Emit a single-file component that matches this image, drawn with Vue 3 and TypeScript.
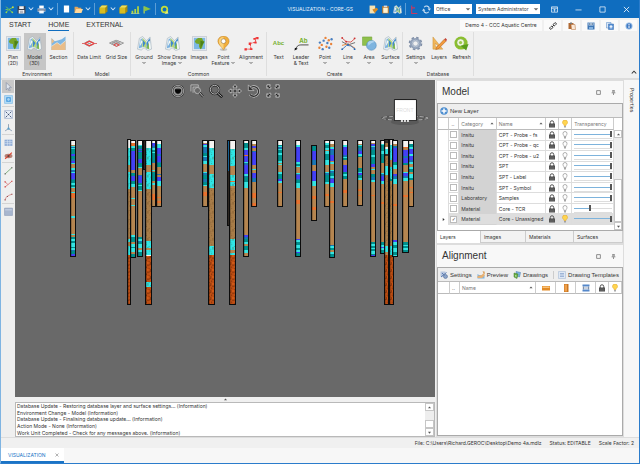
<script setup lang="ts">
import { ref } from 'vue'

interface Tool { label: string; sub?: string; icon: string; drop?: boolean; active?: boolean }
interface Group { name: string; tools: Tool[] }

const groups: Group[] = [
  { name: 'Environment', tools: [
    { label: 'Plan', sub: '(2D)', icon: 'africa' },
    { label: 'Model', sub: '(3D)', icon: 'map', active: true },
    { label: 'Section', icon: 'section' } ] },
  { name: 'Model', tools: [
    { label: 'Data Limit', icon: 'limit' },
    { label: 'Grid Size', icon: 'grid' } ] },
  { name: 'Common', tools: [
    { label: 'Ground', icon: 'map', drop: true },
    { label: 'Show Drape', sub: 'Image', icon: 'map', drop: true },
    { label: 'Images', icon: 'africa' },
    { label: 'Point', sub: 'Feature', icon: 'pin', drop: true },
    { label: 'Alignment', icon: 'align', drop: true } ] },
  { name: 'Create', tools: [
    { label: 'Text', icon: 'abc' },
    { label: 'Leader', sub: '& Text', icon: 'leader' },
    { label: 'Point', icon: 'points', drop: true },
    { label: 'Line', icon: 'lines', drop: true },
    { label: 'Area', icon: 'area', drop: true },
    { label: 'Surface', icon: 'map', drop: true } ] },
  { name: 'Database', tools: [
    { label: 'Settings', icon: 'gear', drop: true },
    { label: 'Layers', icon: 'layers' },
    { label: 'Refresh', icon: 'refresh' } ] },
]

const sideTools = [
  ['Select', 'select'], ['Zoom to selection', 'selbox'], ['', ''], ['Extents', 'extents'], ['Axes', 'axes'], ['', ''],
  ['Grid', 'table'], ['Hide', 'hide'], ['', ''], ['Line', 'sline'], ['Snap', 'snap'], ['Curve', 'curve'], ['', ''], ['Block', 'block'],
]
const navTools = ['orbit', 'zoomwin', 'zoom', 'pan', 'rotate', 'fit']

interface Layer { category: string; name: string; level: number; on?: boolean }
const layers = ref<Layer[]>([
  { category: 'Insitu', name: 'CPT - Probe - fs', level: 100 },
  { category: 'Insitu', name: 'CPT - Probe - qc', level: 100 },
  { category: 'Insitu', name: 'CPT - Probe - u2', level: 100 },
  { category: 'Insitu', name: 'SPT', level: 100 },
  { category: 'Insitu', name: 'SPT - Label', level: 100 },
  { category: 'Insitu', name: 'SPT - Symbol', level: 100 },
  { category: 'Laboratory', name: 'Samples', level: 100 },
  { category: 'Material', name: 'Core - TCR', level: 42 },
  { category: 'Material', name: 'Core - Unassigned', level: 100, on: true },
])

const log = [
  'Database Update - Restoring database layer and surface settings... (Information)',
  'Environment Change - Model (Information)',
  'Database Update - Finalising database update... (Information)',
  'Action Mode - None (Information)',
  'Work Unit Completed - Check for any messages above. (Information)',
]

// Strata colours keyed by the letter used in each hole's log
const strata: Record<string, string> = {
  w: '#f6f4f2', b: '#b58550', c: '#35e4e2', t: '#008f8c', u: '#4340f4', o: '#e8712e',
  s: '#1a76b4', r: '#bd4d12', d: '#38302a', x: '#a87c48', p: '#2fe6e6',
}
// x centre, inner width, top, bottom, strata as letter + thickness
const logs: [number, number, number, number, string][] = [
  [144, 1, 141, 169, 'd28'],
  [228, 2, 141, 225, 's30 d55'],
  [129, 2, 140, 303, 'w8 p17 b7 p17 x50 p3 x4 p9 r48'],
  [73, 4, 141, 256, 'w4 b1 c1 s1 c1 t5 u2 t3 s2 u2 c1 b4 c2 s2 c1 u6 s1 t3 c2 t2 c1 b4 c1 o5 b20 c2 b16 c1 b2 t2 c2 t2 c4 t1 c2 s1 t3 u2'],
  [133, 4, 141, 257, 'w2 o3 c2 t3 u19 b3 t3 u5 t3 c3 b11 c1 b6 c1 b34 c2 t5 b2 c3 t1 c4 b2 t3'],
  [140, 4, 141, 256, 'w4 c1 t3 u1 t1 u1 t7 u4 t4 c1 b7 s1 u7 t2 c1 t4 c1 b58 t2 c2 s1 t2 c4 b2 c2 t4'],
  [148, 5, 141, 303, 'w7 p17 b7 p17 x52 p7 b2 p5 w1 r26 p5 r16'],
  [153, 3, 141, 206, 'w2 u3 s2 c2 t2 c1 t12 s1 b7 c1 b1 t9 b2 c2 b9 o6 b6'],
  [159, 4, 141, 206, 'w3 c4 u6 s2 u6 s1 t4 b7 s1 b2 u4 c5 b11 o1 b3 o2 b3'],
  [205, 4, 141, 206, 'w2 b1 u1 c2 s6 t3 c1 s4 c3 b8 c1 s2 t4 s3 t3 c1 b6 o4 b11'],
  [211, 5, 141, 303, 'w7 p17 b9 p14 x58 p9 r48'],
  [231, 5, 141, 303, 'w8 p17 b9 p6 o1 p4 b2 x51 p11 b3 p2 r48'],
  [245, 4, 141, 256, 'w2 t5 c2 u5 o1 u6 c1 s2 u9 c2 s1 t5 c6 b52 u2 s2 t3 c2 b2 t4 c3 b3'],
  [253, 4, 141, 206, 'w3 b2 u2 b3 s1 u14 b4 c1 b3 u5 s4 b11 o5 b5 o3'],
  [279, 4, 141, 206, 'w4 t1 c1 s2 c1 t3 c2 t6 c2 b1 c1 b7 c2 t5 u2 c2 b9 o1 b13'],
  [297, 4, 141, 256, 'w4 c2 u15 c2 t2 c1 b6 c1 s1 u4 s1 t3 c5 b12 o4 b40 u1 c2 t3 c3 t2 c2 u1 t3'],
  [313, 4, 146, 220, 't5 u11 s5 b6 u10 c5 b10 o3 b8 o3 b10'],
  [326, 4, 141, 206, 'w2 c2 t3 c2 b1 c3 t6 c5 b7 c1 s2 t7 c2 b10 o2 b10'],
  [331, 4, 141, 257, 'w3 b3 c2 u1 s5 u6 b1 c2 b6 c1 s2 t3 c2 s1 u4 c4 b14 o2 b42 s1 c2 t2 b2 c2 t3'],
  [344, 4, 141, 206, 'w4 c2 u8 s2 c1 t2 b5 u7 t2 c2 t3 b11 o3 b12'],
  [359, 4, 141, 205, 'w3 b1 c1 t2 s3 u3 c2 t1 b8 b3 t4 c1 u2 t3 c2 b9 o2 b4 o1 b9'],
  [372, 4, 141, 256, 'w2 b1 u2 c1 s3 t5 c2 t7 u3 b2 c1 b4 t3 s3 c2 b13 o1 b40 t2 c2 t2 c1 t2 c3 t1 u1'],
  [382, 4, 141, 253, 'w3 c1 t6 c3 t9 b10 c1 s2 u5 c3 b18 o2 b36 t3 c2 u1 c2 t3'],
  [385, 3, 140, 303, 'd3 x4 w2 c5 d2 x10 c9 x70 c6 b3 r48'],
  [390, 3, 140, 303, 'w5 p15 b7 p12 t2 b3 x69 p9 r48'],
  [394, 4, 141, 256, 'w3 b2 s2 u14 t3 c4 b5 u2 s3 c5 b20 o2 b35 u2 c3 t3 c4 t3 c1'],
  [404, 5, 141, 252, 'w6 o1 b2 u6 s2 u5 t2 b7 c1 u3 s2 c3 b14 o2 b40 t3 c1 t2 c2 t2'],
  [410, 4, 141, 206, 'w3 t3 c2 u5 c2 u4 s2 c2 b3 c2 t3 b2 c4 t2 b7 o1 b4 o1 b14'],
]

interface Seg { y: number; h: number; c: string; rough: string }
const holes = logs.map(([cx, w, top, bottom, text]) => {
  const parts = text.split(' ').map((p) => ({ k: p[0], h: Number(p.slice(1)) }))
  // The thickest stratum takes up whatever the others leave
  const total = parts.reduce((n, p) => n + p.h, 0)
  const fill = parts.filter((p) => p.k !== 'r').reduce((a, b) => (b.h > a.h ? b : a))
  fill.h += bottom - top - total
  let y = top
  const segs: Seg[] = parts.map(({ k, h }) => {
    const seg = { y, h, c: strata[k], rough: k === 'r' ? 'url(#coarse)' : 'px'.includes(k) ? 'url(#rough)' : '' }
    y += h
    return seg
  })
  return { x: cx - Math.floor(w / 2), w, top, height: bottom - top, segs }
})
</script>

<template>
  <div class="app">
    <svg class="defs" aria-hidden="true">
      <symbol id="spark" viewBox="0 0 16 16"><path d="M2 3l5 5M14 4L7 8l-5 5M7 8l6 5M1 8h4" stroke="#7ed348" stroke-width="1.6" fill="none" /><circle cx="14" cy="4" r="1.6" fill="#d5e33c" /><circle cx="13" cy="13" r="1.6" fill="#9bd84a" /><circle cx="2.500" cy="13" r="1.500" fill="#9bd84a" /></symbol>
      <symbol id="save" viewBox="0 0 16 16"><path d="M1 2h14v13H1z" fill="#39414f" /><path d="M4 2h8v5H4zM3 9h10v6H3z" fill="#f2f4f8" /><path d="M5 11h6M5 13h6" stroke="#667" /></symbol>
      <symbol id="print" viewBox="0 0 16 16"><path d="M4 1h8v5H4z" fill="#fff" /><path d="M1 6h14v6H1z" fill="#b9c6d8" /><path d="M1 8h14v2H1z" fill="#55657c" /><path d="M4 10h8v5H4z" fill="#f4f8fc" /></symbol>
      <symbol id="page" viewBox="0 0 16 16"><path d="M2 0h12v16H2z" fill="#fff" /></symbol>
      <symbol id="folder" viewBox="0 0 16 16"><path d="M1 3h5l2 2h5v9H1z" fill="#e1a65c" /><path d="M4 7h12l-3 7H1z" fill="#ffd79a" /></symbol>
      <symbol id="cube" viewBox="0 0 16 16"><path d="M1 5l4-4h10v10l-4 4H1z" fill="#a88e10" /><path d="M1 5h10v10H1z" fill="#d9bd20" /><path d="M1 5l4-4h10l-4 4z" fill="#f2de58" /></symbol>
      <symbol id="bars" viewBox="0 0 16 16"><path d="M1 10h3v5H1zM6 7h3v8H6zM11 2h3v13h-3z" fill="#b7d83b" /><path d="M0 15h15" stroke="#e6ef8e" /></symbol>
      <symbol id="flag" viewBox="0 0 16 16"><path d="M2 2v13" stroke="#c6e04a" stroke-width="2" /><path d="M3 2l11 5-11 4z" fill="#8cc63f" /></symbol>
      <symbol id="loop" viewBox="0 0 16 16"><circle cx="8" cy="8" r="5" fill="none" stroke="#c5dc3a" stroke-width="3" /><path d="M8 16l5-6 2 5z" fill="#e8f07b" /></symbol>
      <symbol id="edit" viewBox="0 0 16 16"><path d="M1 1h10v14H1z" fill="#f7e3b2" /><path d="M6 8l8-3 2 3-6 6z" fill="#d88a22" /></symbol>
      <symbol id="clip" viewBox="0 0 16 16"><path d="M2 2h12v13H2z" fill="#b97b35" /><path d="M4 5h8v9H4z" fill="#fff3d0" /><path d="M5 1h6v3H5z" fill="#d9dde4" /></symbol>
      <symbol id="axis" viewBox="0 0 16 16"><path d="M3 1v14h10M3 5h6" stroke="#c43a62" stroke-width="2" fill="none" /></symbol>
      <symbol id="sync" viewBox="0 0 16 16"><path d="M3 10a5 5 0 0 0 9 2M13 6a5 5 0 0 0-9-2" fill="none" stroke="#cfe2f4" stroke-width="2" /><path d="M0 10h6L3 6zM16 6h-6l3 4z" fill="#cfe2f4" /></symbol>
      <symbol id="chev" viewBox="0 0 8 8"><path d="M1 2l3 3 3-3" fill="none" stroke="currentColor" stroke-width="1.400" /></symbol>
      <symbol id="tri" viewBox="0 0 8 8"><path d="M1 3h6L4 6z" fill="currentColor" /></symbol>
      <symbol id="triup" viewBox="0 0 8 8"><path d="M0 6h8L4 1z" fill="currentColor" /></symbol>
      <symbol id="dock" viewBox="0 0 16 16"><path d="M1 2h14v12H1zM1 5h14M8 13V8M5 10l3-3 3 3" fill="none" stroke="#fff" stroke-width="1.600" /></symbol>
      <symbol id="min" viewBox="0 0 16 16"><path d="M1 9h14" stroke="#fff" stroke-width="1.600" /></symbol>
      <symbol id="max" viewBox="0 0 16 16"><path d="M2 2h12v12H2z" stroke="#fff" stroke-width="1.600" fill="none" /></symbol>
      <symbol id="close" viewBox="0 0 16 16"><path d="M2 2l12 12M14 2L2 14" stroke="currentColor" stroke-width="1.800" /></symbol>
      <symbol id="link" viewBox="0 0 16 16"><g fill="none" stroke="#333" stroke-width="1.800"><rect x="-3.500" y="-2" width="7" height="4" rx="2" transform="translate(4.500 11.500) rotate(-45)" /><rect x="-3.500" y="-2" width="7" height="4" rx="2" transform="translate(11.500 4.500) rotate(-45)" /><path d="M6 10l4-4" /></g></symbol>
      <symbol id="paste" viewBox="0 0 16 16"><path d="M1 2h10v12H1z" fill="#b06a35" /><path d="M4 1h4v3H4z" fill="#777" /><path d="M6 5h8l1 10H7z" fill="#fbe9d8" stroke="#b06a35" /></symbol>
      <symbol id="disk" viewBox="0 0 16 16"><path d="M1 1h14v14H1z" fill="#3d75b5" /><path d="M3 1h10v6H3z" fill="#cfe0f2" /><path d="M4 3h3v2H4zM9 3h3v2H9z" fill="#24476f" /><path d="M4 10h8v5H4z" fill="#85b2df" /></symbol>
      <symbol id="copyadd" viewBox="0 0 16 16"><path d="M1 1h9v11H1z" fill="#dce9f8" stroke="#4f84c4" /><path d="M5 4h10v11H5z" fill="#5a92d6" stroke="#2e66ad" /><path d="M10 6v7M7 9.500h6" stroke="#fff" stroke-width="2" /></symbol>
      <symbol id="info" viewBox="0 0 16 16"><circle cx="8" cy="8" r="7" fill="#8eb6e2" /><circle cx="8" cy="8" r="5" fill="#3f78c2" /><path d="M8 4v2M8 7v5" stroke="#fff" stroke-width="2" /></symbol>
      <symbol id="africa" viewBox="0 0 32 32"><path d="M1 1h30v30H1z" fill="#e6e9ee" stroke="#a7b1bf" /><path d="M4 4h24v24H4z" fill="#7db8e4" /><path d="M8 8l5-4h8l3 6 3 2-3 5-3 9-3 2-3-5 0-6-6-1-3-4z" fill="#76a528" /><path d="M18 10l8 2-5 9-3 7z" fill="#4c8218" /></symbol>
      <symbol id="map" viewBox="0 0 32 32"><path d="M1 28L5 5l7-4 8 9 8-8 3 26-8 3-8-6-6 5z" fill="#e6edf1" stroke="#93a4b2" /><path d="M4 26L7 8l5-4-1 20z" fill="#79b0df" /><path d="M12 4l8 8v14l-5-3-4 1z" fill="#b6d777" /><path d="M12 8l6 7-5 9zM20 15l7-11 1 10-7 14z" fill="#3f88cc" /><path d="M8 8l4 4-6 10zM24 12l3-2 2 16-4 2z" fill="#f5f8f4" /><path d="M20 26l5-12 1 14z" fill="#7db655" /></symbol>
      <symbol id="section" viewBox="0 0 32 32"><path d="M1 4l7 7 8-2 7-2 8-6v29H1z" fill="#7fb7e2" /><path d="M1 22l12-8 7 5 11-9v20H1z" fill="#e9bd89" /><path d="M1 5l6 6-6 6z" fill="#e9bd89" /><path d="M1 22l12-8 7 5 11-9" fill="none" stroke="#fff" /></symbol>
      <symbol id="limit" viewBox="0 0 32 32"><g fill="none" stroke-width="2"><path d="M4 16l11-6 12 6-12 6zM9 13l13 6M22 13l-13 6" stroke="#9a9a9a" /><path d="M6 16l10-5 10 5-10 5z" stroke="#ee3c3c" stroke-width="2.400" /><path d="M0 16h7M25 16h7" stroke="#d66" /></g></symbol>
      <symbol id="grid" viewBox="0 0 32 32"><g fill="none" stroke-width="2"><path d="M1 15l14-6 16 6-15 7zM6 12.500l15 7M11 11l15 7M25 12L9 19M20 10L5 17" stroke="#959595" /><path d="M10 19l6-3 6 3-6 3z" stroke="#e54b4b" /></g></symbol>
      <symbol id="pin" viewBox="0 0 32 32"><ellipse cx="16" cy="29" rx="8" ry="3" fill="#999" opacity=".5" /><path d="M16 30C13 22 4 19 4 11a12 11 0 0 1 24 0c0 8-9 11-12 19z" fill="#f1ae3c" stroke="#b97a1d" /><path d="M16 30C13 22 6 19 6 11a10 9 0 0 1 10-9z" fill="#fad27c" /><circle cx="16" cy="11" r="5" fill="#fff" stroke="#7b5520" /></symbol>
      <symbol id="align" viewBox="0 0 32 32"><path d="M3 28h12l-2-12 12-3-1-9h6" fill="none" stroke="#e44" stroke-width="2" stroke-dasharray="5 1" /><g fill="#e33"><path d="M1 26h5v5H1zM13 26h5v4h-5zM10 14h5v5h-5zM22 12h5v4h-5zM26 2h5v5h-5zM20 4h5v4h-5z" /></g></symbol>
      <symbol id="leader" viewBox="0 0 32 32"><path d="M4 29c2-9 6-10 13-10h14" fill="none" stroke="#444" stroke-width="2" /><path d="M1 31l1-6 6 2z" fill="#111" /></symbol>
      <symbol id="points" viewBox="0 0 32 32"><g fill="#4a7fc0"><circle cx="4" cy="14" r="2.500" /><circle cx="12" cy="10" r="2.500" /><circle cx="20" cy="15" r="2.500" /><circle cx="29" cy="7" r="2.500" /><circle cx="10" cy="28" r="2.500" /><circle cx="24" cy="25" r="2.500" /></g><g fill="#e8833a"><circle cx="8" cy="19" r="2.500" /><circle cx="16" cy="4" r="2.500" /><circle cx="23" cy="9" r="2.500" /><circle cx="28" cy="17" r="2.500" /><circle cx="3" cy="25" r="2.500" /><circle cx="18" cy="23" r="2.500" /></g></symbol>
      <symbol id="lines" viewBox="0 0 32 32"><g fill="none" stroke-width="2"><path d="M2 4l9 8 10 1 9-8" stroke="#d9534f" /><path d="M2 12l13 7 15-5" stroke="#6b6b6b" /><path d="M2 20l13-3 15 9" stroke="#e8833a" /><path d="M2 29l10-9 9 1 9 7" stroke="#3f78bd" /></g><g fill="#c33"><circle cx="2.500" cy="4" r="2" /><circle cx="29" cy="5" r="2" /><circle cx="11" cy="12" r="2" /></g><g fill="#2f6ab3"><circle cx="2.500" cy="28" r="2" /><circle cx="29" cy="28" r="2" /><circle cx="15" cy="18" r="2" /></g></symbol>
      <symbol id="area" viewBox="0 0 32 32"><path d="M1 2h20v18H1z" fill="#8fc04c" stroke="#6a9a30" /><circle cx="20" cy="20" r="10.500" fill="#7eb4df" stroke="#4684ba" /><path d="M12 14a10 10 0 0 1 15-1c-5 1-10 4-13 8z" fill="#aed3ef" /></symbol>
      <symbol id="gear" viewBox="0 0 32 32"><circle cx="16" cy="16" r="12" fill="none" stroke="#7f8ea6" stroke-width="5" stroke-dasharray="5 4.420" /><circle cx="16" cy="16" r="8.500" fill="none" stroke="#93a2b9" stroke-width="7" /><circle cx="16" cy="16" r="7" fill="none" stroke="#c5cedb" stroke-width="1.500" /></symbol>
      <symbol id="layers" viewBox="0 0 32 32"><path d="M2 2l21 26H2zM7 15v8h7z" fill="#f2b75c" fill-rule="evenodd" stroke="#c58930" /><path d="M10 24L26 7l4 4-16 16-6 2z" fill="#f29a3c" stroke="#a65a1a" /><path d="M26 7l3-3 3 4-2 3z" fill="#c6453b" /></symbol>
      <symbol id="refresh" viewBox="0 0 32 32"><circle cx="15" cy="15" r="14" fill="#8bbf2f" /><circle cx="14" cy="14" r="8" fill="#eef5df" stroke="#5f9518" /><circle cx="14" cy="14" r="3.500" fill="#9bc94a" /><path d="M14 21l17-4-5 14z" fill="#589c1c" /></symbol>
      <symbol id="select" viewBox="0 0 16 16"><path d="M4 1l9 9H9l2 5-2 1-2-5-3 3z" fill="#dfe5ee" stroke="#75819a" /></symbol>
      <symbol id="selbox" viewBox="0 0 16 16"><path d="M1 1h14v14H1z" fill="#b6dcf6" stroke="#6eb2e4" /><path d="M4 4h8v8H4z" fill="#3f97dc" /><circle cx="8" cy="8" r="2.500" fill="#a8d5f6" /></symbol>
      <symbol id="extents" viewBox="0 0 16 16"><path d="M1 1h14v14H1z" fill="#e7edf6" stroke="#8fa3c2" /><path d="M3 3l3 3M13 3l-3 3M3 13l3-3M13 13l-3-3" stroke="#34466a" stroke-width="1.500" /><path d="M7 7h2v2H7z" fill="#34466a" /></symbol>
      <symbol id="axes" viewBox="0 0 16 16"><path d="M8 2v8M8 10l-6 4M8 10l6 4" stroke="#8195ad" stroke-width="1.500" /><circle cx="8" cy="10" r="2" fill="#57a0cb" /></symbol>
      <symbol id="table" viewBox="0 0 16 16"><path d="M1 3h14v11H1z" fill="#8facd6" /><path d="M1 6.500h14M1 10h14M6 3v11M10.500 3v11" stroke="#dfe9f6" /></symbol>
      <symbol id="hide" viewBox="0 0 16 16"><ellipse cx="8" cy="9" rx="7" ry="4" fill="#b78176" /><path d="M2 14L14 3" stroke="#e2412e" stroke-width="2" /><circle cx="8" cy="9" r="2" fill="#67423c" /></symbol>
      <symbol id="sline" viewBox="0 0 16 16"><path d="M2 14L14 3" stroke="#6ea76e" stroke-width="1.500" /><path d="M1 13h2v2H1zM13 2h2v2h-2z" fill="#555" /></symbol>
      <symbol id="snap" viewBox="0 0 16 16"><path d="M2 14l5-4 7-6M2 5l5 5" fill="none" stroke="#d46666" stroke-width="1.300" /><path d="M1 13h2v2H1zM13 3h2v2h-2zM1 4h2v2H1z" fill="#c33" /></symbol>
      <symbol id="curve" viewBox="0 0 16 16"><path d="M2 14c1-6 6-8 12-10" fill="none" stroke="#c77" stroke-width="1.300" /><path d="M1 13h2v2H1zM13 3h2v2h-2zM5 7h2v2H5z" fill="#944" /></symbol>
      <symbol id="block" viewBox="0 0 16 16"><path d="M1 2h14v13H1z" fill="#a8b6cf" stroke="#8595b3" /><path d="M2 5h12" stroke="#c8d2e4" stroke-width="2" /></symbol>
      <symbol id="orbit" viewBox="0 0 32 32"><circle cx="16" cy="16" r="13" fill="none" stroke="#333" stroke-width="4" /><circle cx="16" cy="16" r="13" fill="none" stroke="#ccc" stroke-width="1.600" /><circle cx="16" cy="16" r="9" fill="none" stroke="#ccc" stroke-width="1.300" /><path d="M9 12h14c1 5-3 10-7 10s-8-5-7-10z" fill="#050505" /></symbol>
      <symbol id="zoomwin" viewBox="0 0 32 32"><g fill="none" stroke="#bbb" stroke-width="2"><path d="M2 17V2h17v4M7 20V7h14" /><circle cx="17" cy="15" r="7" /></g><path d="M22 20l8 9" stroke="#222" stroke-width="5" /><path d="M22 20l8 9" stroke="#ddd" stroke-width="2" /></symbol>
      <symbol id="zoom" viewBox="0 0 32 32"><circle cx="13" cy="13" r="10" fill="none" stroke="#222" stroke-width="5" /><circle cx="13" cy="13" r="10" fill="none" stroke="#ccc" stroke-width="2" /><path d="M20 21l10 9" stroke="#111" stroke-width="6" /><path d="M20 21l9 8" stroke="#ddd" stroke-width="1.800" /></symbol>
      <symbol id="pan" viewBox="0 0 32 32"><path d="M16 1l5 6h-3v7h7v-3l6 5-6 5v-3h-7v7h3l-5 6-5-6h3v-7H7v3l-6-5 6-5v3h7V7h-3z" fill="#333" stroke="#ccc" stroke-width="1.800" /></symbol>
      <symbol id="rotate" viewBox="0 0 32 32"><path d="M8 9a11 11 0 1 1-1 15" fill="none" stroke="#ccc" stroke-width="6" /><path d="M8 9a11 11 0 1 1-1 15" fill="none" stroke="#333" stroke-width="3" /><path d="M3 2v13h13z" fill="#333" stroke="#ccc" stroke-width="1.500" /></symbol>
      <symbol id="fit" viewBox="0 0 32 32"><g fill="#222" stroke="#ddd" stroke-width="1.800"><path d="M2 2h8l-2 3 4 4-3 3-4-4-3 2zM30 2v8l-3-2-4 4-3-3 4-4-2-3zM2 30v-8l3 2 4-4 3 3-4 4 2 3zM30 30h-8l2-3-4-4 3-3 4 4 3-2z" /></g></symbol>
      <symbol id="lock" viewBox="0 0 16 16"><path d="M4.500 8V5a3.500 3.500 0 0 1 7 0v3" fill="none" stroke="#555" stroke-width="2" /><path d="M2 7h12v8H2z" fill="#484848" /><path d="M3 10h10M3 12.500h10" stroke="#999" stroke-width=".8" /></symbol>
      <symbol id="bulb" viewBox="0 0 16 16"><path d="M6 11C6 8 4 8 4 5a4 4 0 0 1 8 0c0 3-2 3-2 6z" fill="#fff" stroke="#808080" stroke-width="1.200" /><path d="M6 13h4M7 15h2" stroke="#808080" stroke-width="1.400" /></symbol>
      <symbol id="bulbon" viewBox="0 0 16 16"><path d="M6 11C6 8 3 8 3 5a5 5 0 0 1 10 0c0 3-3 3-3 6z" fill="#ffd550" stroke="#dc9f1d" /><path d="M6 13h4M7 15h2" stroke="#8b8b8b" stroke-width="1.500" /></symbol>
      <symbol id="plus" viewBox="0 0 16 16"><circle cx="8" cy="8" r="7.500" fill="#4f8fd0" /><path d="M8 3v10M3 8h10" stroke="#fff" stroke-width="3" /></symbol>
      <symbol id="square" viewBox="0 0 8 8"><path d="M1 1h6v6H1z" fill="none" stroke="#777" stroke-width="1.300" /></symbol>
      <symbol id="tack" viewBox="0 0 8 8"><path d="M2 1h4M3 1v3M5 1v3M1 4.500h6M4 5v3" fill="none" stroke="#777" stroke-width="1.300" /></symbol>
      <symbol id="acfg" viewBox="0 0 16 16"><path d="M1 1h10v10H1z" fill="#b7c6df" /><path d="M2 12L13 3M4 4l9 9" stroke="#5a7bb0" stroke-width="2" /><circle cx="11" cy="11" r="4" fill="#8aa3c9" stroke="#44618f" /></symbol>
      <symbol id="prev" viewBox="0 0 16 16"><path d="M1 6l3 2h11v7H1z" fill="#7cb2e0" /><path d="M1 10l8-2 6-5v7l-5 4H1z" fill="#e8b173" /><path d="M11 1h4v5z" fill="#d58b34" /></symbol>
      <symbol id="draws" viewBox="0 0 16 16"><path d="M6 1l9 2-2 9-5-2z" fill="#7eb6e0" stroke="#3f75aa" /><path d="M2 4l8 2-2 9-6-3z" fill="#69ad40" stroke="#3d7a28" /><path d="M4 8l3 1-1 4z" fill="#d7edc8" /></symbol>
      <symbol id="tmpl" viewBox="0 0 16 16"><path d="M1 1h14v14H1z" fill="#dfe8f5" stroke="#9db2d1" /><path d="M4 5h8M4 8h8M4 11h8" stroke="#829fca" stroke-width="1.400" /></symbol>
      <symbol id="brick" viewBox="0 0 16 16"><path d="M0 4h16v9H0z" fill="#e28b26" /><path d="M1 5h14v3H1z" fill="#f9c177" /></symbol>
      <symbol id="door" viewBox="0 0 16 16"><path d="M4 0h9v16H4z" fill="#c97622" /><path d="M5 1h5v14H5z" fill="#efa04a" /></symbol>
      <symbol id="span" viewBox="0 0 16 16"><path d="M1 1h14v4H1zM1 11h14v4H1z" fill="#5487ca" /><path d="M1 8h14M3 5v6M13 5v6" stroke="#334f78" /></symbol>
    </svg>

    <header class="titlebar">
      <div class="quick">
        <button aria-label="Application menu"><svg><use href="#spark" /></svg></button>
        <button aria-label="Save"><svg><use href="#save" /></svg></button>
        <button class="mini" aria-label="Save options"><svg><use href="#chev" /></svg></button>
        <button aria-label="Print"><svg><use href="#print" /></svg></button>
        <button class="mini" aria-label="Print options"><svg><use href="#chev" /></svg></button>
        <i class="bar"></i>
        <button aria-label="New"><svg class="tight"><use href="#page" /></svg></button>
        <button aria-label="Open"><svg><use href="#folder" /></svg></button>
        <button class="mini" aria-label="Open options"><svg><use href="#chev" /></svg></button>
        <i class="bar"></i>
        <button aria-label="Box"><svg><use href="#cube" /></svg></button>
        <button class="mini" aria-label="Box options"><svg><use href="#chev" /></svg></button>
        <button aria-label="Solid"><svg><use href="#cube" /></svg></button>
        <button aria-label="Chart"><svg><use href="#bars" /></svg></button>
        <button aria-label="Flag"><svg><use href="#flag" /></svg></button>
        <i class="bar"></i>
        <button aria-label="Reload"><svg><use href="#loop" /></svg></button>
      </div>
      <h1>VISUALIZATION - CORE-GS</h1>
      <div class="session">
        <button aria-label="Edit"><svg><use href="#edit" /></svg></button>
        <button aria-label="Clipboard"><svg><use href="#clip" /></svg></button>
        <button aria-label="Map"><svg><use href="#map" /></svg></button>
        <i class="bar"></i>
        <button aria-label="Axis"><svg><use href="#axis" /></svg></button>
        <button aria-label="Synchronise"><svg><use href="#sync" /></svg></button>
        <div class="pick office"><select aria-label="Mode"><option>Office</option></select><svg><use href="#tri" /></svg></div>
        <div class="pick"><select aria-label="Role"><option>System Administrator</option></select><svg><use href="#tri" /></svg></div>
      </div>
      <div class="window">
        <button aria-label="Ribbon display"><svg><use href="#dock" /></svg></button>
        <button aria-label="Minimise"><svg><use href="#min" /></svg></button>
        <button aria-label="Maximise"><svg><use href="#max" /></svg></button>
        <button aria-label="Close"><svg><use href="#close" /></svg></button>
      </div>
    </header>

    <nav class="tabs">
      <a href="#start">START</a>
      <a href="#home" class="current">HOME</a>
      <a href="#external">EXTERNAL</a>
      <div class="project">
        <span>Demo 4 - CCC Aquatic Centre</span>
        <button aria-label="Link"><svg><use href="#link" /></svg></button>
        <button aria-label="Paste"><svg><use href="#paste" /></svg></button>
        <button aria-label="Store"><svg><use href="#disk" /></svg></button>
        <button aria-label="Copy"><svg><use href="#copyadd" /></svg></button>
        <button aria-label="About"><svg><use href="#info" /></svg></button>
      </div>
    </nav>

    <section class="ribbon">
      <div v-for="g in groups" :key="g.name" class="group" :class="g.name.toLowerCase()">
        <div class="tools">
          <button v-for="t in g.tools" :key="t.label + t.icon" :class="{ active: t.active }">
            <span v-if="t.icon === 'abc'" class="glyph abc">Abc</span>
            <span v-else-if="t.icon === 'leader'" class="glyph lead"><svg><use href="#leader" /></svg><b>Ab</b></span>
            <svg v-else class="glyph"><use :href="'#' + t.icon" /></svg>
            <span class="cap">{{ t.label }}</span>
            <span class="cap second">{{ t.sub }}<svg v-if="t.drop"><use href="#chev" /></svg></span>
          </button>
        </div>
        <div class="gname">{{ g.name }}</div>
      </div>
      <button class="fold" aria-label="Collapse ribbon"><svg><use href="#chev" /></svg></button>
    </section>

    <main class="body">
      <div class="side">
        <template v-for="(t, i) in sideTools" :key="i">
          <button v-if="t[1]" :aria-label="t[0]" :class="{ active: i === 0 }"><svg><use :href="'#' + t[1]" /></svg></button>
          <hr v-else>
        </template>
      </div>

      <div class="centre">
        <div class="viewport">
          <svg class="scene" viewBox="15 80 419 318" preserveAspectRatio="xMinYMin slice" shape-rendering="crispEdges">
            <defs>
              <pattern id="rough" width="5" height="9" patternUnits="userSpaceOnUse">
                <path d="M1 1h1v1H1zM3 3h1v1H3zM0 5h1v1H0zM4 7h1v1H4z" fill="#3a2410" fill-opacity=".35" />
                <path d="M2 4h1v2H2zM1 8h1v1H1z" fill="#6b4a20" fill-opacity=".3" />
              </pattern>
              <pattern id="coarse" width="5" height="7" patternUnits="userSpaceOnUse">
                <path d="M1 0h1v2H1zM3 2h1v1H3zM0 3h1v2H0zM2 5h2v1H2zM4 4h1v1H4z" fill="#4a1a04" fill-opacity=".5" />
                <path d="M2 3h1v1H2zM4 0h1v1H4z" fill="#e0641c" fill-opacity=".6" />
              </pattern>
            </defs>
            <g v-for="(h, i) in holes" :key="i">
              <rect :x="h.x - 1" :y="h.top - 1" :width="h.w + 2" :height="h.height + 2" fill="#0c0c0c" />
              <template v-for="(s, j) in h.segs" :key="j">
                <rect :x="h.x" :y="s.y" :width="h.w" :height="s.h" :fill="s.c" />
                <rect v-if="s.rough" :x="h.x" :y="s.y" :width="h.w" :height="s.h" :fill="s.rough" />
              </template>
              <rect :x="h.x" :y="h.top" width="1" :height="h.height" fill="#000" fill-opacity=".2" />
            </g>
            <g shape-rendering="auto">
              <ellipse cx="404" cy="122" rx="14" ry="3" fill="#444" opacity=".4" />
              <ellipse cx="404" cy="118" rx="23" ry="2" fill="none" stroke="#444" stroke-width="2" opacity=".5" />
              <ellipse cx="404" cy="118" rx="23" ry="2" fill="none" stroke="#aaa" stroke-dasharray="4 2" />
              <rect x="393" y="99" width="23" height="22" rx="1" fill="#222" />
              <rect x="394" y="100" width="21" height="20" fill="#fff" />
              <path d="M400 121h8" stroke="#ddd" stroke-width="2" stroke-dasharray="2 1" />
              <text x="404" y="112" text-anchor="middle" class="face">FRONT</text>
            </g>
          </svg>
          <div class="nav">
            <button v-for="n in navTools" :key="n" :aria-label="n"><svg><use :href="'#' + n" /></svg></button>
          </div>
        </div>
        <div class="split"><svg><use href="#triup" /></svg></div>
        <div class="log">
          <div class="lines"><p v-for="l in log" :key="l">{{ l }}</p></div>
          <div class="scroll">
            <button aria-label="Scroll up"><svg><use href="#triup" /></svg></button>
            <i class="thumb"></i>
            <button aria-label="Scroll down"><svg class="flip"><use href="#triup" /></svg></button>
          </div>
        </div>
      </div>

      <aside class="panels">
        <section class="panel">
          <div class="phead"><h2>Model</h2><svg><use href="#square" /></svg><svg><use href="#tack" /></svg></div>
          <div class="frame">
            <div class="pbar"><button><svg><use href="#plus" /></svg>New Layer</button></div>
            <div class="grid">
              <table class="layers">
                <colgroup><col class="c12"><col class="c10"><col class="c38"><col><col class="c13"><col class="c13"><col class="c42"></colgroup>
                <thead>
                  <tr><th></th><th>..</th><th><span>Category<svg><use href="#triup" /></svg></span></th><th><span>Name<svg><use href="#triup" /></svg></span></th><th><svg class="ic"><use href="#lock" /></svg></th><th><svg class="ic"><use href="#bulbon" /></svg></th><th>Transparency</th></tr>
                </thead>
                <tbody>
                  <tr v-for="l in layers" :key="l.name" :class="{ chosen: l.on }">
                    <td class="mark"><svg v-if="l.on"><use href="#triup" /></svg></td>
                    <td class="tick"><input v-model="l.on" type="checkbox" :aria-label="l.name"></td>
                    <td class="cat">{{ l.category }}</td>
                    <td>{{ l.name }}</td>
                    <td class="mid"><svg class="ic"><use href="#lock" /></svg></td>
                    <td class="mid"><svg class="ic"><use :href="l.on ? '#bulbon' : '#bulb'" /></svg></td>
                    <td class="mid"><input v-model.number="l.level" type="range" min="0" max="100" :style="{ '--level': l.level + '%' }" :aria-label="l.name + ' transparency'"></td>
                  </tr>
                </tbody>
              </table>
              <div class="scroll tall">
                <button aria-label="Scroll up"><svg><use href="#triup" /></svg></button>
                <i class="thumb"></i>
                <button aria-label="Scroll down"><svg class="flip"><use href="#triup" /></svg></button>
              </div>
            </div>
          </div>
          <div class="ptabs">
            <button class="current">Layers</button><button>Images</button><button>Materials</button><button>Surfaces</button>
          </div>
        </section>

        <section class="panel grow">
          <div class="phead"><h2>Alignment</h2><svg><use href="#square" /></svg><svg><use href="#tack" /></svg></div>
          <div class="frame grow">
            <div class="pbar">
              <button><svg><use href="#acfg" /></svg>Settings</button>
              <button><svg><use href="#prev" /></svg>Preview</button>
              <button><svg><use href="#draws" /></svg>Drawings</button>
              <button class="ruled"><svg><use href="#tmpl" /></svg>Drawing Templates</button>
            </div>
            <table class="layers empty">
              <colgroup><col class="c12"><col class="c10"><col><col class="c20"><col class="c20"><col class="c20"><col class="c13"><col class="c13"></colgroup>
              <thead>
                <tr><th></th><th>..</th><th><span>Name<svg><use href="#triup" /></svg></span></th><th><svg class="ic"><use href="#brick" /></svg></th><th><svg class="ic"><use href="#door" /></svg></th><th><svg class="ic"><use href="#span" /></svg></th><th><svg class="ic"><use href="#lock" /></svg></th><th><svg class="ic"><use href="#bulbon" /></svg></th></tr>
              </thead>
            </table>
          </div>
        </section>
      </aside>

      <div class="rail"><button>Properties</button></div>
    </main>

    <footer class="status">
      <span>File: C:\Users\Richard.GEROC\Desktop\Demo 4a.mdlz</span>
      <span>Status: EDITABLE</span>
      <span>Scale Factor: 2</span>
    </footer>
    <div class="docs">
      <div class="doc"><a href="#visualization">VISUALIZATION</a><button aria-label="Close tab"><svg><use href="#close" /></svg></button></div>
    </div>
  </div>
</template>

<style>
body { margin: 0; }
</style>

<style scoped>
* { box-sizing: border-box; }
.app {
  height: 100vh; display: flex; flex-direction: column; overflow: hidden;
  background: #f0f0f0; color: #333; font: 5px/6px Inter, "Liberation Sans", sans-serif;
  border-left: 1px solid #7fb4e2; border-right: 1px solid #2b7ccb; border-bottom: 1px solid #2b7ccb;
}
.defs { position: absolute; width: 0; height: 0; }
button { font: inherit; color: inherit; background: none; border: 0; padding: 0; margin: 0; display: flex; align-items: center; justify-content: center; }
h1, h2, p { margin: 0; font: inherit; }
svg { display: block; flex: none; }
a { color: inherit; text-decoration: none; }

.titlebar { display: flex; align-items: center; height: 18px; flex: none; background: #0f6dbf; color: #fff; }
.titlebar svg { width: 9px; height: 9px; }
.quick { display: flex; align-items: center; padding-left: 2px; height: 18px; }
.quick button { width: 12px; }
.quick .mini { width: 8px; color: #cfe3f6; }
.quick .mini svg { width: 6px; height: 6px; }
.quick svg.tight { width: 7px; height: 8px; }
.bar { width: 1px; height: 12px; background: #5b9dd6; margin: 0 2px; }
.titlebar h1 { color: #e6f1fb; white-space: nowrap; margin-left: auto; }
.session { display: flex; align-items: center; margin-left: 14px; }
.session button { width: 12px; }
.pick { position: relative; width: 64px; height: 10px; margin-left: 4px; }
.pick.office { width: 38px; margin-left: 2px; }
.pick select { appearance: none; width: 100%; height: 10px; border: 0; border-radius: 0; background: #fff; color: #444; font: inherit; padding: 0 2px; display: block; }
.pick svg { position: absolute; right: 1px; top: 2px; width: 6px; height: 6px; color: #666; pointer-events: none; }
.window { display: flex; padding: 0 1px 0 2px; }
.window button { width: 24px; }
.window svg { width: 7px; height: 7px; }

.tabs { display: flex; align-items: flex-end; height: 14px; flex: none; padding: 0 2px 1px 8px; gap: 17px; font: 7px "Liberation Sans", Arial, sans-serif; }
.tabs a { height: 11px; line-height: 10px; border-bottom: 1px solid transparent; }
.tabs a.current { border-color: #0f6dbf; }
.project { display: flex; gap: 2px; margin-left: auto; font: 5px Inter, "Liberation Sans", sans-serif; }
.project span, .project button { background: #fafafa; height: 11px; line-height: 11px; }
.project span { width: 82px; text-align: center; }
.project button { width: 17px; }
.project svg { width: 8px; height: 8px; }

.ribbon { display: flex; height: 48px; flex: none; border-bottom: 2px solid #dcdcdc; position: relative; }
.group { border-right: 1px solid #dedede; margin-bottom: 2px; display: flex; flex-direction: column; flex: none; }
.tools { display: grid; flex: 1; justify-content: center; }
.environment .tools { grid-template-columns: 21px 22px 26px; }
.model .tools { grid-template-columns: 29px 26px; }
.common .tools { grid-template-columns: 26px 30px 24px 25px 30px; }
.create .tools { grid-template-columns: 22px 23px 25px 21px 21px 22px; }
.database .tools { grid-template-columns: 25px 22px 23px; }
.environment { width: 73px; }
.model { width: 57px; }
.common { width: 136px; }
.create { width: 136px; }
.database { width: 71px; }
.tools button { flex-direction: column; justify-content: flex-start; padding-top: 3px; white-space: nowrap; height: 37px; line-height: 6px; margin-top: 1px; }
.tools button.active { background: #c6c6c6; }
.glyph { width: 15px; height: 15px; margin-bottom: 3px; }
.abc { font: bold 6px/15px "Liberation Sans", Arial, sans-serif; color: #77b02e; text-align: center; }
.lead { position: relative; }
.lead svg { width: 15px; height: 15px; }
.lead b { position: absolute; right: 1px; top: 2px; font-size: 6px; color: #77b02e; }
.cap { display: flex; gap: 2px; align-items: center; height: 6px; }
.cap svg { width: 4px; height: 4px; }
.gname { text-align: center; line-height: 8px; height: 8px; }
.fold { position: absolute; right: 2px; bottom: 3px; }
.fold svg { width: 6px; height: 6px; transform: rotate(180deg); }

.body { display: flex; flex: 1; min-height: 0; }
.side { width: 14px; flex: none; display: flex; flex-direction: column; background: #efefef; padding: 0 1px; }
.side button { height: 13px; flex: none; }
.side button.active { background: #c8c8c8; }
.side svg { width: 9px; height: 9px; }
.side hr { width: 100%; margin: 0 0 1px; border: 0; border-top: 1px solid #d4d4d4; }
.centre { flex: 1; min-width: 0; display: flex; flex-direction: column; }
.viewport { flex: 1; min-height: 0; position: relative; background: #696969; }
.scene { width: 100%; height: 100%; }
.face { font: 5px "Liberation Sans", Arial, sans-serif; fill: #ddd; }
.nav { position: absolute; top: 4px; left: 155px; display: flex; gap: 4px; }
.nav svg { width: 14px; height: 14px; }
.nav button { width: 15px; }
.split { height: 5px; flex: none; display: flex; align-items: center; justify-content: center; color: #555; }
.split svg { width: 3px; height: 3px; }
.log { height: 35px; flex: none; display: flex; background: #fff; border: 1px solid #b9b9b9; }
.lines { flex: 1; padding-left: 1px; display: grid; grid-auto-rows: 1fr; align-items: center; white-space: nowrap; }
.scroll { width: 9px; display: flex; flex-direction: column; background: #eee; color: #555; }
.scroll button { height: 8px; background: #fff; border: 1px solid #c6c6c6; flex: none; }
.scroll svg { width: 3px; height: 3px; }
.flip { transform: rotate(180deg); }
.thumb { height: 8px; margin-top: auto; background: #fff; border: 1px solid #c6c6c6; }

.panels { width: 188px; flex: none; margin-left: 1px; display: flex; flex-direction: column; }
.panel { display: flex; flex-direction: column; border: 1px solid #ddd; background: #f8f8f8; }
.grow { flex: 1; }
.phead { height: 22px; display: flex; align-items: center; padding: 0 7px 0 5px; gap: 10px; }
.phead h2 { flex: 1; font: 10px/12px "Liberation Sans", Arial, sans-serif; color: #333; }
.phead svg { width: 5px; height: 5px; }
.frame { border: 1px solid #aaa; background: #fff; display: flex; flex-direction: column; }
.pbar { height: 14px; flex: none; background: #eee; display: flex; align-items: center; gap: 5px; padding: 0 2px; font: 6px "Liberation Sans", Arial, sans-serif; border-bottom: 1px solid #bbb; white-space: nowrap; }
.pbar button { gap: 2px; }
.pbar svg { width: 8px; height: 8px; }
.pbar .ruled { margin: 0 5px 0 auto; padding-left: 4px; border-left: 1px solid #ccc; }
.grid { display: flex; height: 112px; align-items: flex-start; }
.layers { flex: 1; min-width: 0; height: 107px; table-layout: fixed; border-collapse: separate; border-spacing: 0; }
.layers.empty { flex: none; width: 100%; height: 12px; }
.c10 { width: 10px; } .c12 { width: 12px; } .c13 { width: 13px; } .c20 { width: 20px; } .c38 { width: 38px; } .c42 { width: 42px; }
th { height: 12px; padding: 0 2px; font-weight: normal; text-align: left; color: #777; border-right: 1px solid #ccc; border-bottom: 1px solid #bbb; line-height: 6px; }
th span { display: flex; justify-content: space-between; align-items: center; }
th span svg { width: 4px; height: 3px; color: #555; }
th .ic, td .ic { width: 8px; height: 8px; margin: 0 auto; }
td { padding: 0 2px; border-right: 1px solid #ddd; border-bottom: 1px solid #ddd; line-height: 6px; white-space: nowrap; }
td.cat { background: #d3d3d3; border-bottom-color: #d3d3d3; }
td.mid, td.tick { padding: 0; }
td.mark { border-bottom: 0; padding: 0; }
.mark svg { width: 3px; height: 3px; transform: rotate(90deg); margin: 0 auto; }
.chosen td { background: #dedede; }
.chosen td.mark { background: #fff; }
input[type=checkbox] { appearance: none; display: flex; align-items: center; justify-content: center; width: 7px; height: 7px; margin: 0 auto; background: #fff; border: 1px solid #bbb; }
input[type=checkbox]:checked::after { content: "✓"; font: 5px/5px "DejaVu Sans", sans-serif; color: #444; }
input[type=range] { appearance: none; display: block; width: 38px; height: 8px; margin: 0 auto; background: linear-gradient(#7db3dc, #7db3dc) 0 3px / var(--level) 1px no-repeat, linear-gradient(#ddd, #ddd) 0 3px / 100% 1px no-repeat, linear-gradient(#ddd, #ddd) 0 7px / 100% 1px no-repeat; }
input[type=range]::-webkit-slider-thumb { appearance: none; width: 2px; height: 6px; background: #555; margin-top: -1px; }
.tall { align-self: stretch; width: 8px; margin-top: 12px; }
.tall .thumb { height: 43px; }
.ptabs { display: grid; grid-template-columns: 44px 45px 48px 1fr; height: 12px; background: #f2f2f2; }
.ptabs button { justify-content: flex-start; padding-left: 3px; border-right: 1px solid #ccc; border-bottom: 1px solid #ccc; }
.ptabs .current { background: #fff; border-bottom: 0; }
.rail { width: 15px; flex: none; background: #f7f7f7; display: flex; flex-direction: column; padding-top: 8px; }
.rail button { writing-mode: vertical-rl; }

.status { height: 11px; flex: none; display: flex; align-items: center; justify-content: flex-end; gap: 8px; padding-right: 5px; border-top: 1px solid #ddd; }
.docs { height: 15px; flex: none; background: #f7f7f7; display: flex; }
.doc { width: 63px; display: flex; align-items: center; justify-content: space-between; padding: 0 5px 0 7px; background: #fff; border-bottom: 2px solid #1a74c6; color: #1a74c6; }
.doc svg { width: 4px; height: 4px; color: #555; }
</style>
